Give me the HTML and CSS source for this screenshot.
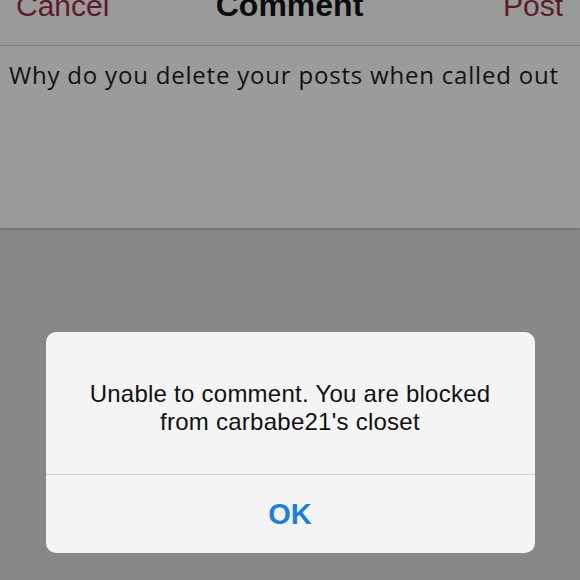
FILE: index.html
```html
<!DOCTYPE html>
<html>
<head>
<meta charset="utf-8">
<link rel="stylesheet" href="styles.css">
</head>
<body>
<div class="screen">
  <header class="navbar">
    <span class="nav-btn nav-left">Cancel</span>
    <span class="nav-title">Comment</span>
    <span class="nav-btn nav-right">Post</span>
  </header>
  <div class="compose">Why do you delete your posts when called out</div>
  <div class="alert">
    <div class="alert-msg">Unable to comment. You are blocked<br>from carbabe21's closet</div>
    <div class="alert-btn">OK</div>
  </div>
</div>
</body>
</html>
```
FILE: styles.css
```css
html, body {
  margin: 0;
  padding: 0;
}
body {
  width: 580px;
  height: 580px;
  overflow: hidden;
  background: #8a8886;
  font-family: "Liberation Sans", Arial, sans-serif;
}
.screen {
  display: flex;
  flex-direction: column;
}
.navbar {
  height: 45px;
  display: grid;
  grid-template-columns: 1fr auto 1fr;
  align-items: start;
  padding: 0 17px 0 16px;
  background: #9a9a9a;
  border-bottom: 1px solid #848484;
  line-height: 11px;
}
.nav-btn {
  font-size: 30px;
  color: #5e1c2b;
}
.nav-left {
  justify-self: start;
}
.nav-right {
  justify-self: end;
}
.nav-title {
  font-size: 32px;
  font-weight: bold;
  color: #0c0c0c;
  line-height: 10px;
}
.compose {
  height: 168px;
  padding: 14px 9px 0 9px;
  background: #9b9b9b;
  font-family: "Open Sans", "Liberation Sans", sans-serif;
  font-size: 24px;
  line-height: 30px;
  letter-spacing: 0.8px;
  color: #121212;
  white-space: nowrap;
  box-shadow: 0 1px 3px rgba(0, 0, 0, 0.25);
}
.alert {
  width: 489px;
  margin: 104px auto 0 auto;
  background: #f4f4f4;
  border-radius: 10px;
  text-align: center;
  color: #111;
}
.alert-msg {
  padding: 48px 20px 38px 20px;
  font-size: 24px;
  line-height: 28px;
  letter-spacing: 0.25px;
  border-bottom: 1px solid #d2d2d2;
}
.alert-btn {
  height: 78px;
  line-height: 78px;
  font-size: 29px;
  font-weight: bold;
  color: #1a7fe0;
}
```
